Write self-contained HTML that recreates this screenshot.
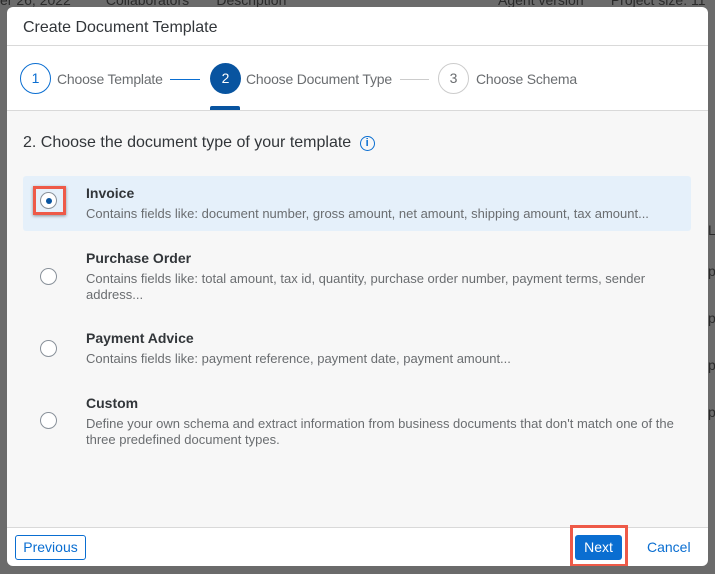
<!DOCTYPE html><html><head><style>
body{margin:0;width:715px;height:574px;background:#6b6b6b;font-family:"Liberation Sans",sans-serif;position:relative;overflow:hidden}
.bgt{position:absolute;color:#2a2a2a;font-size:14px}
.dlg{position:absolute;left:7px;top:7px;width:701px;height:559px;background:#fff;border-radius:6px;overflow:hidden}
.hd{height:39px;border-bottom:1px solid #d9d9d9;font-size:16px;color:#32363a;padding:12px 0 0 16px;box-sizing:border-box}
.wz{height:64px;border-bottom:1px solid #d9d9d9;position:relative}
.c{position:absolute;top:17px;width:31px;height:31px;border-radius:50%;box-sizing:border-box;text-align:center;line-height:31px;font-size:14px}
.l{position:absolute;top:25px;font-size:14px;color:#6a6d70;letter-spacing:-0.2px}
.ln{position:absolute;top:33px;height:1px}
.ct{position:absolute;top:104px;left:0;right:0;height:416px;background:#f7f7f7}
.h2{position:absolute;left:16px;top:23px;font-size:16px;color:#32363a}
.it{position:absolute;left:16px;width:668px}
.rd{position:absolute;left:17px;width:17px;height:17px;border:1px solid #89919a;border-radius:50%;background:#fff;box-sizing:border-box}
.t{position:absolute;left:63px;top:9px;font-size:14px;font-weight:bold;color:#32363a}
.d{position:absolute;left:63px;top:30px;font-size:13px;color:#6a6d70;line-height:16px;width:592px}
.ft{position:absolute;top:520px;left:0;right:0;height:39px;border-top:1px solid #d9d9d9}
</style></head><body>
<div class="bgt" style="left:0;top:-8px">er 26, 2022&nbsp;&nbsp;&nbsp;&nbsp;&nbsp;&nbsp;&nbsp;&nbsp; Collaborators&nbsp;&nbsp;&nbsp;&nbsp;&nbsp;&nbsp; Description</div>
<div class="bgt" style="left:498px;top:-8px">Agent version&nbsp;&nbsp;&nbsp;&nbsp;&nbsp;&nbsp; Project size: 11</div>
<div class="bgt" style="left:708px;top:222px">L</div>
<div class="bgt" style="left:708px;top:263px">p</div>
<div class="bgt" style="left:708px;top:310px">p</div>
<div class="bgt" style="left:708px;top:357px">p</div>
<div class="bgt" style="left:708px;top:404px">p</div>
<div class="dlg">
<div class="hd">Create Document Template</div>
<div class="wz">
<div class="c" style="left:13px;border:1px solid #0a6ed1;color:#0a6ed1;line-height:29px">1</div>
<div class="l" style="left:50px">Choose Template</div>
<div class="ln" style="left:163px;width:30px;background:#0a6ed1"></div>
<div class="c" style="left:203px;background:#0854a0;color:#fff">2</div>
<div class="l" style="left:239px">Choose Document Type</div>
<div class="ln" style="left:393px;width:29px;background:#ccc"></div>
<div class="c" style="left:431px;border:1px solid #ccc;color:#6a6d70;line-height:29px">3</div>
<div class="l" style="left:469px">Choose Schema</div>
<div style="position:absolute;left:203px;top:60px;width:30px;height:4px;background:#0854a0;border-radius:2px 2px 0 0"></div>
</div>
<div class="ct">
<div class="h2">2. Choose the document type of your template <span style="display:inline-block;width:13px;height:13px;border:1.5px solid #0a6ed1;border-radius:50%;color:#0a6ed1;font-size:11px;line-height:13px;text-align:center;font-weight:bold;vertical-align:1px;margin-left:4px">i</span></div>
<div class="it" style="top:65px;height:55px;background:#e5f0fa;border-radius:3px">
<div style="position:absolute;left:10px;top:10px;width:33px;height:29px;border:3px solid #ee5a48;box-sizing:border-box;box-shadow:0 1px 3px rgba(0,0,0,.4)"></div>
<div class="rd" style="top:16px"><div style="position:absolute;left:4.5px;top:4.5px;width:6px;height:6px;border-radius:50%;background:#0854a0"></div></div>
<div class="t">Invoice</div>
<div class="d">Contains fields like: document number, gross amount, net amount, shipping amount, tax amount...</div>
</div>
<div class="it" style="top:130px;height:70px">
<div class="rd" style="top:27px"></div>
<div class="t">Purchase Order</div>
<div class="d">Contains fields like: total amount, tax id, quantity, purchase order number, payment terms, sender address...</div>
</div>
<div class="it" style="top:210px;height:55px">
<div class="rd" style="top:19px"></div>
<div class="t">Payment Advice</div>
<div class="d">Contains fields like: payment reference, payment date, payment amount...</div>
</div>
<div class="it" style="top:275px;height:70px">
<div class="rd" style="top:26px"></div>
<div class="t">Custom</div>
<div class="d">Define your own schema and extract information from business documents that don't match one of the three predefined document types.</div>
</div>
</div>
<div class="ft">
<div style="position:absolute;left:8px;top:7px;width:71px;height:25px;border:1px solid #0a6ed1;border-radius:3px;box-sizing:border-box;color:#0a6ed1;font-size:14px;text-align:center;line-height:23px">Previous</div>
<div style="position:absolute;left:563px;top:-3px;width:58px;height:42px;border:3px solid #ee5a48;box-sizing:border-box"></div>
<div style="position:absolute;left:568px;top:7px;width:47px;height:25px;background:#0a6ed1;border-radius:3px;color:#fff;font-size:14px;text-align:center;line-height:25px">Next</div>
<div style="position:absolute;left:640px;top:11px;color:#0a6ed1;font-size:14px">Cancel</div>
</div>
</div>
</body></html>
